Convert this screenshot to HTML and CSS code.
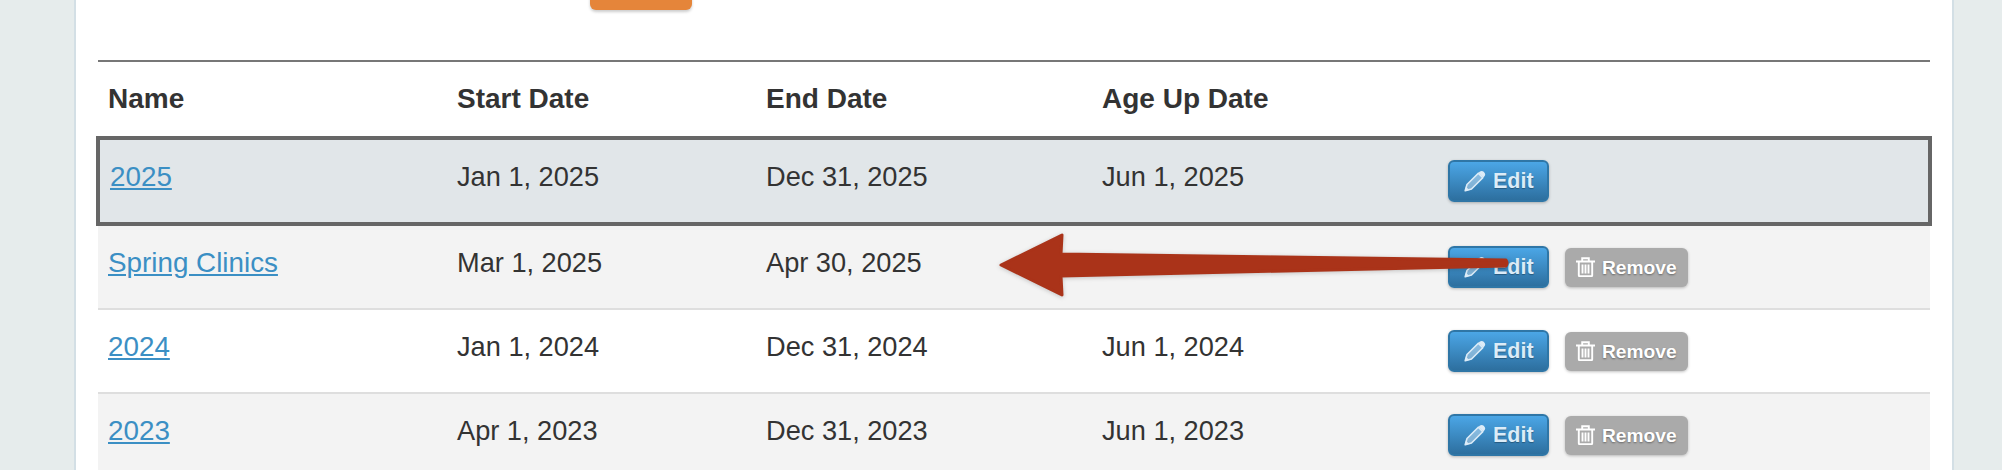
FILE: index.html
```html
<!DOCTYPE html>
<html lang="en">
<head>
    <meta charset="UTF-8">
    <title>Seasons</title>
    <link rel="stylesheet" href="styles.css">
</head>
<body>
    <!-- icons used by the buttons -->
    <svg class="icon-defs">
        <symbol id="pencil" viewBox="0 0 22 22">
            <path d="M1.200 20.800l1.800-6.300L14.300 3.200l4.500 4.500L7.500 19z" fill="currentColor" fill-opacity="0.45" stroke="currentColor" stroke-width="1.600" stroke-linejoin="round"/>
            <path d="M1 21l.9-4.300 3.400 3.400z" fill="currentColor"/>
            <path d="M15.600 1.800c1.200-1.200 3-1.200 4.100 0l.6.6c1.200 1.200 1.200 2.900 0 4.100l-1 1-4.800-4.600z" fill="currentColor"/>
        </symbol>
        <symbol id="trash" viewBox="0 0 19 20">
            <path d="M0 4.500h19M6.200 4V1.200h6.600V4M2.800 5v13.200c0 .6.400 1 1 1h11.400c.6 0 1-.4 1-1V5" fill="none" stroke="currentColor" stroke-width="1.900"/>
            <path d="M6.500 7.500v9M9.500 7.500v9M12.500 7.500v9" stroke="currentColor" stroke-width="1.900"/>
        </symbol>
    </svg>

    <div class="panel">
        <div class="add-btn"></div>

        <div class="season-table">
            <div class="row row-head">
                <div class="cell">Name</div>
                <div class="cell">Start Date</div>
                <div class="cell">End Date</div>
                <div class="cell">Age Up Date</div>
                <div class="cell"></div>
            </div>

            <div class="row row-current">
                <div class="cell"><a href="#">2025</a></div>
                <div class="cell">Jan 1, 2025</div>
                <div class="cell">Dec 31, 2025</div>
                <div class="cell">Jun 1, 2025</div>
                <div class="actions">
                    <button class="btn btn-edit"><svg class="icon-pencil"><use href="#pencil"/></svg>Edit</button>
                </div>
            </div>

            <div class="row row-alt">
                <div class="cell"><a href="#">Spring Clinics</a></div>
                <div class="cell">Mar 1, 2025</div>
                <div class="cell">Apr 30, 2025</div>
                <div class="cell"></div>
                <div class="actions">
                    <button class="btn btn-edit"><svg class="icon-pencil"><use href="#pencil"/></svg>Edit</button>
                    <button class="btn btn-remove"><svg class="icon-trash"><use href="#trash"/></svg>Remove</button>
                </div>
            </div>

            <div class="row">
                <div class="cell"><a href="#">2024</a></div>
                <div class="cell">Jan 1, 2024</div>
                <div class="cell">Dec 31, 2024</div>
                <div class="cell">Jun 1, 2024</div>
                <div class="actions">
                    <button class="btn btn-edit"><svg class="icon-pencil"><use href="#pencil"/></svg>Edit</button>
                    <button class="btn btn-remove"><svg class="icon-trash"><use href="#trash"/></svg>Remove</button>
                </div>
            </div>

            <div class="row row-alt">
                <div class="cell"><a href="#">2023</a></div>
                <div class="cell">Apr 1, 2023</div>
                <div class="cell">Dec 31, 2023</div>
                <div class="cell">Jun 1, 2023</div>
                <div class="actions">
                    <button class="btn btn-edit"><svg class="icon-pencil"><use href="#pencil"/></svg>Edit</button>
                    <button class="btn btn-remove"><svg class="icon-trash"><use href="#trash"/></svg>Remove</button>
                </div>
            </div>
        </div>
    </div>

    <!-- annotation drawn over the table -->
    <svg class="arrow" viewBox="0 0 530 80"><path d="M11 40L72 10 71 29 516 35Q518 38 516 41L71 51 72 70z" fill="#aa3319" stroke="#aa3319" stroke-width="3" stroke-linejoin="round"/></svg>
</body>
</html>
```

FILE: styles.css
```css
html, body {
    height: 470px;
    overflow: hidden;
}
body {
    margin: 0;
    position: relative;
    background-color: #e6ecec;
    font-family: 'Liberation Sans', Arial, sans-serif;
    font-size: 27.2px;
    color: #333;
}
.icon-defs {
    display: none;
}
.panel {
    margin: 0 48px 0 74px;
    padding: 0 22px;
    height: 520px;
    background-color: #fff;
    border-left: 2px solid #d3dfe5;
    border-right: 2px solid #d3dfe5;
}
.add-btn {
    width: 102px;
    height: 42px;
    margin: -32px 0 50px 492px;
    background-color: #e5853a;
    border-radius: 6px;
    box-shadow: 0 2px 3px rgba(0,0,0,0.2);
}
.season-table {
    border-top: 2px solid #777;
}
.row {
    display: grid;
    grid-template-columns: 349px 309px 336px 346px 1fr;
    align-items: center;
    height: 84px;
    box-sizing: border-box;
    border-bottom: 2px solid #dedede;
}
.row-alt {
    background-color: #f3f3f3;
}
.row-head {
    height: 74px;
    border-bottom: none;
    font-size: 28px;
    font-weight: bold;
}
.row-head .cell {
    padding-bottom: 0;
}
.row-current {
    grid-template-columns: 347px 309px 336px 346px 1fr;
    height: 90px;
    margin: 0 -2px;
    border: 4px solid #666;
    background-color: #e1e6e9;
}
.cell {
    padding: 0 10px 9px;
}
.cell a {
    color: #3b8fc4;
    font-size: 27.8px;
}
.actions {
    display: flex;
    align-items: center;
    gap: 16px;
    padding-left: 10px;
}
.btn {
    display: flex;
    align-items: center;
    box-sizing: border-box;
    border-radius: 6px;
    font-family: inherit;
    font-weight: bold;
    padding: 0;
}
.btn-edit {
    width: 101px;
    height: 42px;
    gap: 7px;
    padding-left: 14px;
    font-size: 21.5px;
    color: #dcecf8;
    background: linear-gradient(#4ba6e6, #2d6f9f);
    border: 2px solid #2f76a6;
    box-shadow: 0 1px 3px rgba(0,0,0,0.25);
    text-shadow: 0 1px 1px rgba(0,0,0,0.3);
}
.btn-remove {
    width: 123px;
    height: 39px;
    gap: 7px;
    padding: 2px 0 0 11px;
    font-size: 19.2px;
    color: #fff;
    background-color: #aaa;
    border: none;
    box-shadow: 0 1px 3px rgba(0,0,0,0.25);
    text-shadow: 0 1px 2px rgba(0,0,0,0.4);
}
.icon-pencil {
    width: 22px;
    height: 22px;
}
.icon-trash {
    width: 19px;
    height: 20px;
    margin-top: -3px;
}
.arrow {
    position: absolute;
    left: 990px;
    top: 225px;
    width: 530px;
    height: 80px;
    filter: drop-shadow(0 1px 2px rgba(0,0,0,0.2));
}
```
